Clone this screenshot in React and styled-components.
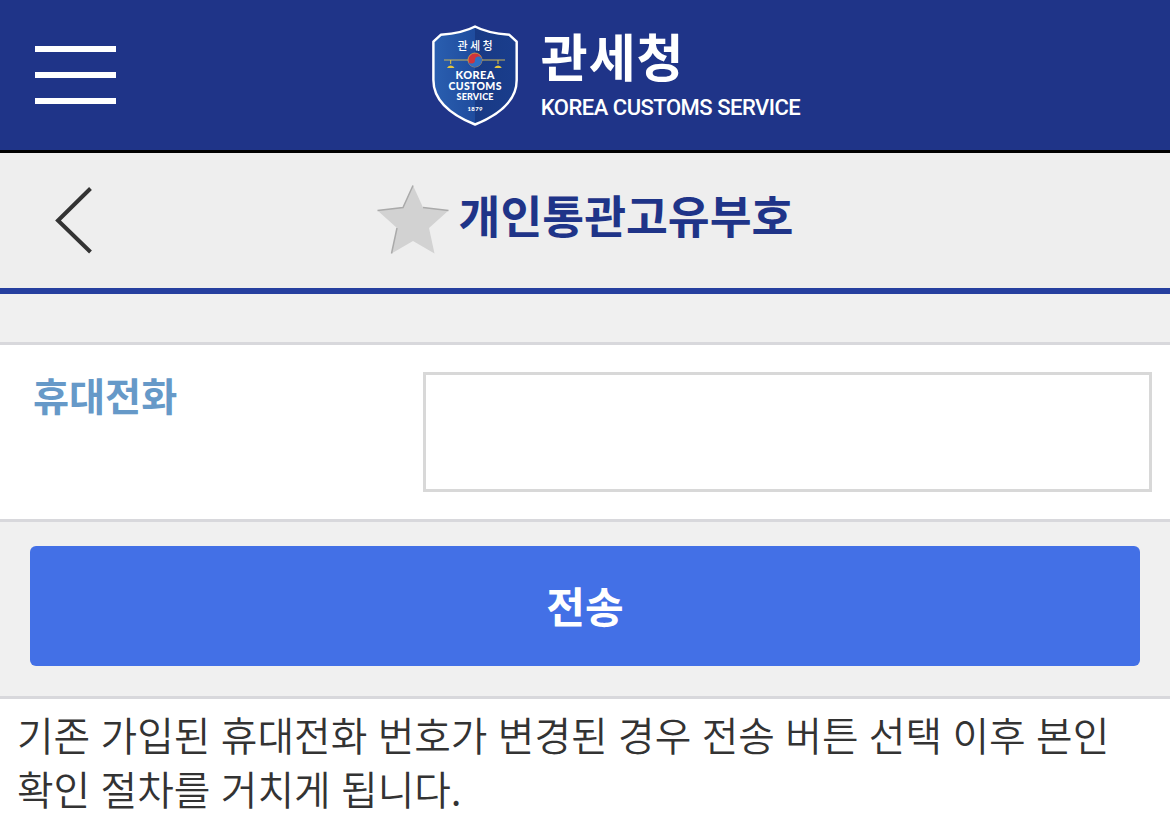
import React from 'react';
import styled, { createGlobalStyle } from 'styled-components';

const GlobalStyle = createGlobalStyle`
  html, body { margin: 0; padding: 0; background: #fff; }
  body { font-family: "Noto Sans CJK KR", "Noto Sans", sans-serif; overflow: hidden; }
`;

const Page = styled.div`
  width: 1170px;
  height: 827px;
  overflow: hidden;
  background: #fff;
`;

const Header = styled.header`
  height: 150px;
  background: #1f3488;
  display: flex;
  align-items: center;
  justify-content: center;
  position: relative;
`;

const Burger = styled.div`
  position: absolute;
  left: 35px;
  top: 46px;
  width: 81px;
  height: 58px;
  display: flex;
  flex-direction: column;
  justify-content: space-between;
  span { display: block; height: 6px; background: #fff; }
`;

const Brand = styled.div`
  display: flex;
  align-items: center;
  gap: 23px;
  margin-left: 62px;
`;

const BrandText = styled.div`
  display: flex;
  flex-direction: column;
  color: #fff;
  margin-top: -2px;
`;

const BrandKo = styled.div`
  font-size: 51px;
  font-weight: 700;
  line-height: 58px;
  letter-spacing: 1px;
`;

const BrandEn = styled.div`
  font-family: "Roboto", sans-serif;
  font-size: 22px;
  font-weight: 500;
  line-height: 30px;
  margin-top: 9px;
  letter-spacing: -0.5px;
`;

const ShieldText = styled.text`
  font-family: "Lato", sans-serif;
  font-weight: 900;
  fill: #fff;
  text-anchor: middle;
`;

const ShieldHangul = styled(ShieldText)`
  font-family: "Noto Sans CJK KR", sans-serif;
  font-weight: 500;
`;

const TitleBar = styled.div`
  height: 135px;
  background: #eeeeee;
  border-top: 3px solid #000;
  border-bottom: 6px solid #263f9f;
  display: flex;
  align-items: center;
  justify-content: center;
  position: relative;
`;

const Back = styled.svg`
  position: absolute;
  left: 51px;
  top: 33px;
`;

const Title = styled.h1`
  margin: 0 0 14px;
  font-size: 45.5px;
  font-weight: 700;
  color: #1f3488;
  line-height: 60px;
`;

const TitleInner = styled.div`
  display: flex;
  align-items: center;
  gap: 10px;
`;

const Star = styled.svg`
  margin-bottom: 2px;
`;

const Spacer = styled.div`
  height: 48px;
  background: #f0f0f0;
`;

const FormRow = styled.div`
  display: flex;
  height: 180px;
  box-sizing: border-box;
  border-top: 3px solid #d8d8dc;
  border-bottom: 3px solid #d8d8dc;
  background: #fff;
  padding: 27px 18px 0 33px;
`;

const Label = styled.label`
  width: 390px;
  margin-top: -2px;
  font-size: 39.2px;
  font-weight: 700;
  color: #6699c8;
  line-height: 48px;
`;

const Input = styled.input`
  flex: 1;
  height: 120px;
  box-sizing: border-box;
  border: 3px solid #d8d8d8;
  background: #fff;
  outline: none;
`;

const ButtonArea = styled.div`
  background: #f0f0f0;
  padding: 24px 30px 30px;
  height: 177px;
  box-sizing: border-box;
  border-bottom: 3px solid #d8d8dc;
`;

const Submit = styled.button`
  display: block;
  width: 100%;
  height: 120px;
  padding: 0 0 4px;
  border: 0;
  border-radius: 6px;
  background: #4370e6;
  color: #fff;
  font-family: inherit;
  font-size: 42px;
  font-weight: 700;
`;

const Notice = styled.p`
  margin: 0;
  padding: 8px 18px 0 17px;
  font-size: 39.8px;
  font-weight: 350;
  line-height: 54px;
  word-spacing: 1.5px;
  color: #333;
  word-break: keep-all;
`;

function CustomsShield() {
  const outline = 'M43 0.5 C33 6 20 8 8 9 L0.5 16 V55 C0.5 78 22 92 43 100.5 C64 92 85.5 78 85.5 55 V16 L78 9 C66 8 53 6 43 0.5 Z';
  return (
    <svg width="86" height="101" viewBox="0 0 86 101">
      <defs>
        <linearGradient id="shieldFill" x1="0" x2="1" y1="0" y2="0">
          <stop offset="0" stopColor="#2a5fb0" />
          <stop offset="0.5" stopColor="#1f4c9e" />
          <stop offset="0.5" stopColor="#183a85" />
          <stop offset="1" stopColor="#1a3d8c" />
        </linearGradient>
      </defs>
      <path d={outline} fill="url(#shieldFill)" stroke="#fff" strokeWidth="2.5" strokeLinejoin="round" transform="translate(0.9 1) scale(0.98)" />
      <ShieldHangul x="43" y="25" fontSize="11" textLength="35">관세청</ShieldHangul>
      <line x1="12" y1="35" x2="73" y2="35" stroke="#c9b458" strokeWidth="1" />
      <circle cx="43" cy="35" r="7" fill="#d0343c" stroke="#d9a441" strokeWidth="0.8" />
      <path d="M36 35 a7 7 0 0 0 14 0 a3.5 3.5 0 0 0 -7 0 a3.5 3.5 0 0 1 -7 0 Z" fill="#2f6fc4" />
      <path d="M15 43 a4 4 0 0 1 7.5 0 Z M62.3 43 a4 4 0 0 1 7.5 0 Z" fill="#e4c53c" />
      <path d="M18.7 35 V39 M66 35 V39" stroke="#e4c53c" strokeWidth="1" />
      <ShieldText x="43" y="54" fontSize="11" textLength="39">KOREA</ShieldText>
      <ShieldText x="43" y="65" fontSize="10.5" textLength="53">CUSTOMS</ShieldText>
      <ShieldText x="43" y="75" fontSize="9" textLength="37">SERVICE</ShieldText>
      <ShieldText x="43" y="86" fontSize="6" textLength="15">1879</ShieldText>
    </svg>
  );
}

export default function App() {
  return (
    <Page>
      <GlobalStyle />
      <Header>
        <Burger><span /><span /><span /></Burger>
        <Brand>
          <CustomsShield />
          <BrandText>
            <BrandKo>관세청</BrandKo>
            <BrandEn>KOREA CUSTOMS SERVICE</BrandEn>
          </BrandText>
        </Brand>
      </Header>
      <TitleBar>
        <Back width="44" height="70" viewBox="0 0 44 70">
          <path d="M39.5 2.5 L7 34.5 L39.5 66" fill="none" stroke="#333" strokeWidth="4" />
        </Back>
        <TitleInner>
          <Star width="72" height="69" viewBox="0 0 72 69">
            <path d="M36 0.5 L46 22.5 L71.5 25.5 L52 43 L57.5 68.5 L36 56 L14.5 68.5 L20 43 L0.5 25.5 L26 22.5 Z" fill="#d2d2d2" />
            <path d="M36 0.5 L26 22.5 L0.5 25.5 M14.5 68.5 L20 43 M46 22.5 L71.5 25.5" fill="none" stroke="#aaa" strokeWidth="1.5" />
          </Star>
          <Title>개인통관고유부호</Title>
        </TitleInner>
      </TitleBar>
      <Spacer />
      <FormRow>
        <Label>휴대전화</Label>
        <Input />
      </FormRow>
      <ButtonArea>
        <Submit>전송</Submit>
      </ButtonArea>
      <Notice>기존 가입된 휴대전화 번호가 변경된 경우 전송 버튼 선택 이후 본인 확인 절차를 거치게 됩니다.</Notice>
    </Page>
  );
}
